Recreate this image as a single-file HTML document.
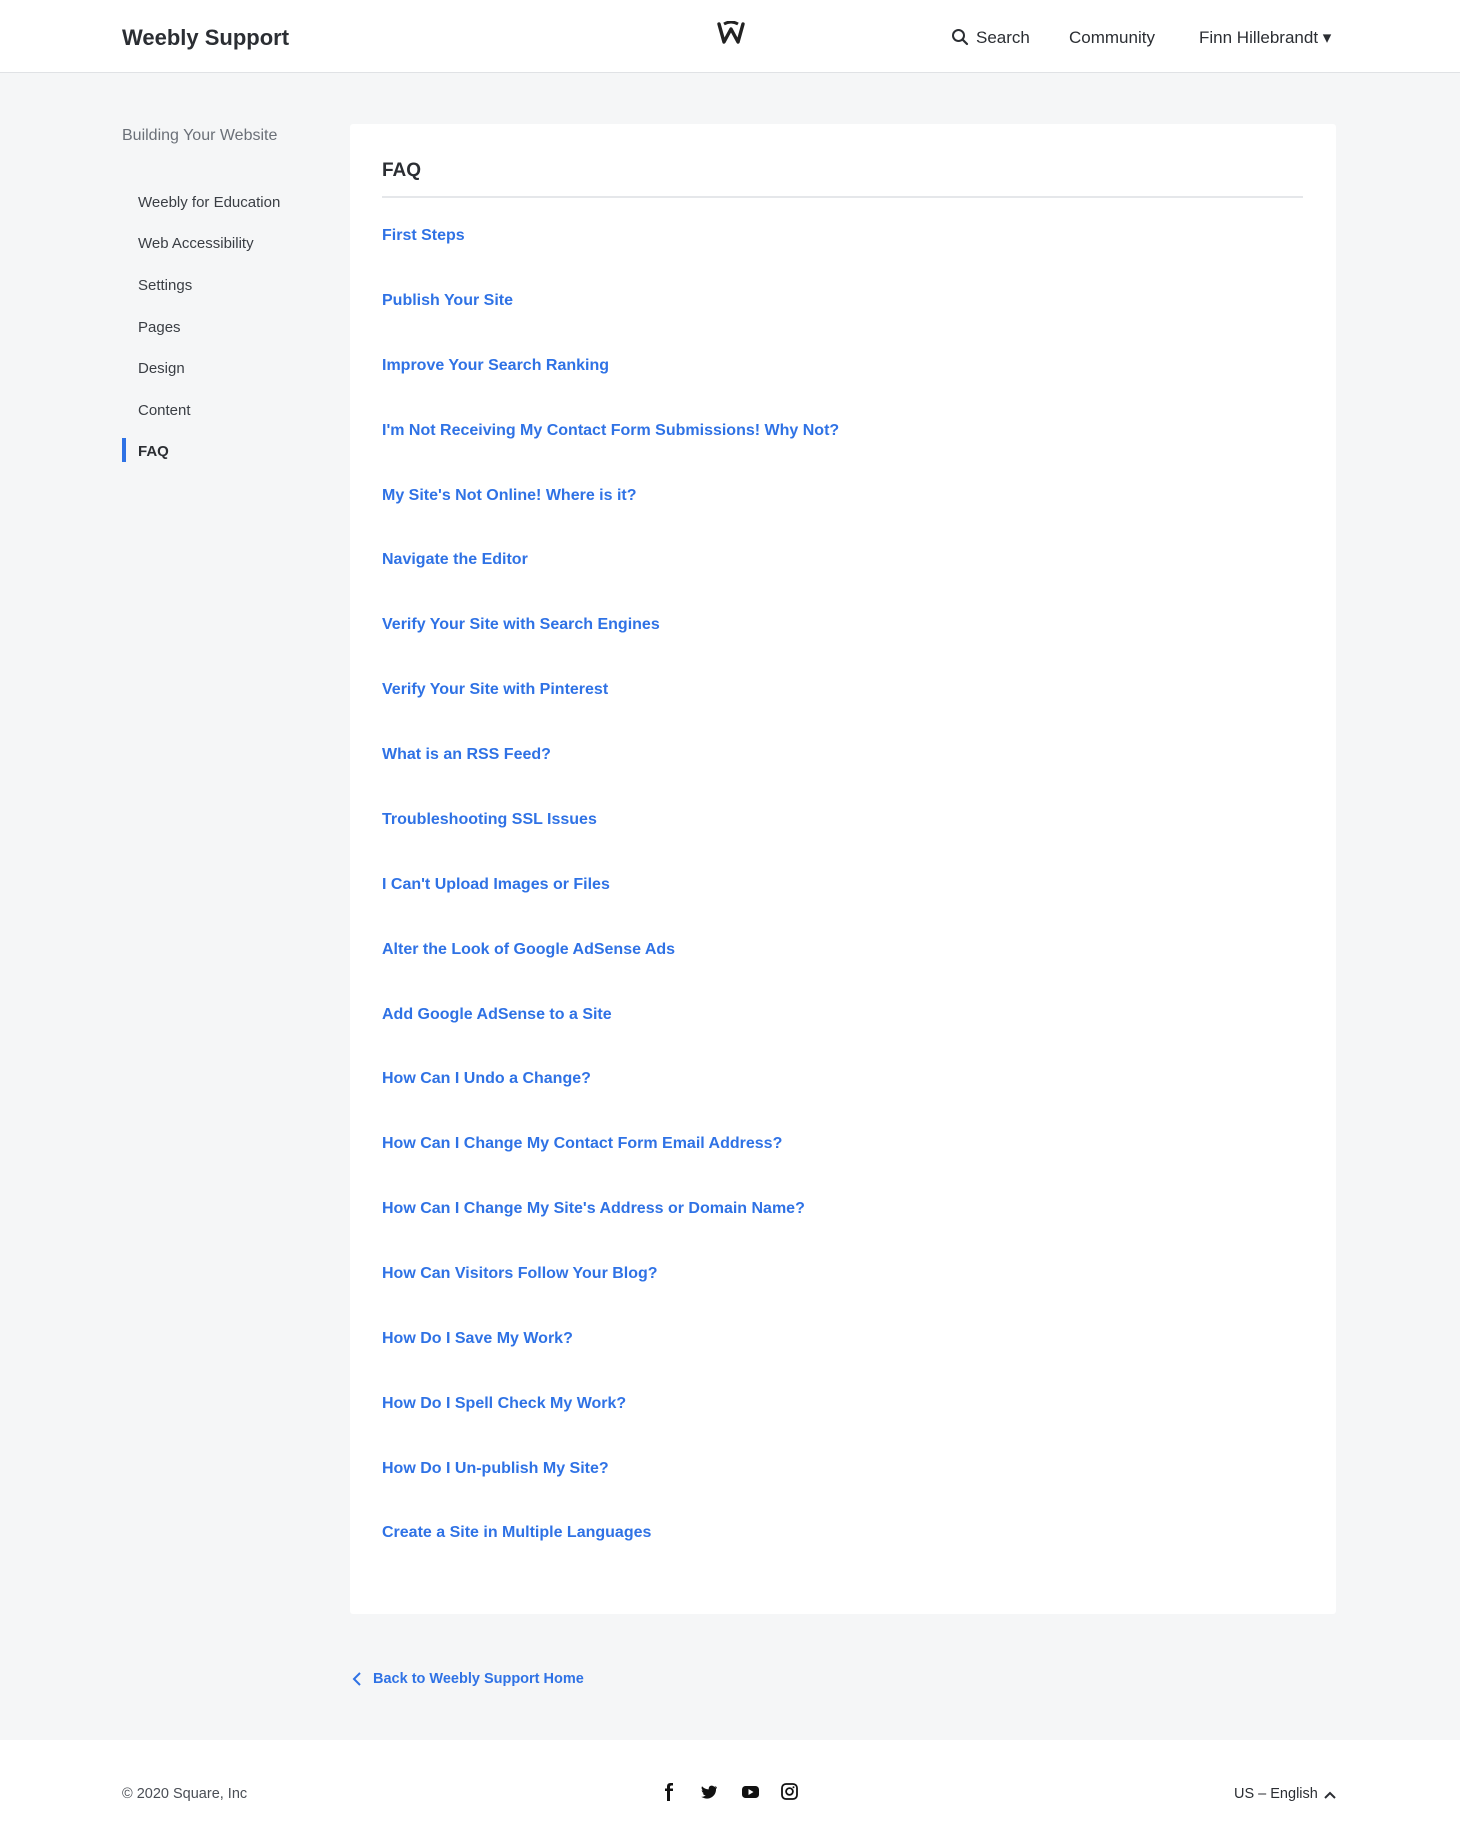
<!DOCTYPE html>
<html><head><meta charset="utf-8"><style>
*{margin:0;padding:0;box-sizing:border-box}
body{width:1460px;height:1845px;background:#f5f6f7;font-family:"Liberation Sans",sans-serif;position:relative;overflow:hidden;color:#2b2e33}
.hdr{position:absolute;left:0;top:0;width:1460px;height:73px;background:#fff;border-bottom:1px solid #e0e2e5}
.abs{position:absolute;white-space:nowrap}
.title{left:122px;top:25px;font-size:22px;font-weight:bold;color:#2b2e33}
.nav{top:28px;font-size:17px;color:#2b2e33}
.side{left:122px;top:127px;font-size:16px;color:#6b7078}
.si{left:138px;font-size:15px;color:#3a3e44}
.card{position:absolute;left:350px;top:124px;width:986px;height:1490px;background:#fff;border-radius:3px}
.faq{left:382px;top:160px;font-size:19px;font-weight:bold;color:#2b2e33}
.div{position:absolute;left:382px;top:196px;width:921px;height:2px;background:#e5e7ea}
.lk{left:382px;font-size:16px;font-weight:bold;color:#2f72e5}
.ftr{position:absolute;left:0;top:1740px;width:1460px;height:105px;background:#fff}
</style></head><body>
<div class="hdr"></div>
<div class="abs title">Weebly Support</div>
<svg class="abs" style="left:716px;top:21px" width="30" height="24" viewBox="0 0 30 24"><path d="M3 3 L8 21 L15 8 L22 21 L27 3" fill="none" stroke="#222" stroke-width="3.4" stroke-linejoin="round" stroke-linecap="round"/><path d="M8 3 Q15 -1 22 3" fill="none" stroke="#222" stroke-width="3"/></svg>
<svg class="abs" style="left:951px;top:28px" width="18" height="18" viewBox="0 0 18 18"><circle cx="7.5" cy="7.5" r="5.5" fill="none" stroke="#2b2e33" stroke-width="2"/><path d="M11.5 11.5 L16 16" stroke="#2b2e33" stroke-width="2.2" stroke-linecap="round"/></svg>
<div class="abs nav" style="left:976px">Search</div>
<div class="abs nav" style="left:1069px">Community</div>
<div class="abs nav" style="left:1199px">Finn Hillebrandt ▾</div>

<div class="abs side">Building Your Website</div>
<div class="abs si" style="top:194px">Weebly for Education</div>
<div class="abs si" style="top:235px">Web Accessibility</div>
<div class="abs si" style="top:277px">Settings</div>
<div class="abs si" style="top:319px">Pages</div>
<div class="abs si" style="top:360px">Design</div>
<div class="abs si" style="top:402px">Content</div>
<div class="abs" style="left:122px;top:438px;width:4px;height:24px;background:#2f72e5"></div>
<div class="abs si" style="top:443px;font-weight:bold;color:#2b2e33">FAQ</div>

<div class="card"></div>
<div class="abs faq">FAQ</div>
<div class="div"></div>
<div class="abs lk" style="top:227px">First Steps</div>
<div class="abs lk" style="top:292px">Publish Your Site</div>
<div class="abs lk" style="top:357px">Improve Your Search Ranking</div>
<div class="abs lk" style="top:422px">I'm Not Receiving My Contact Form Submissions! Why Not?</div>
<div class="abs lk" style="top:487px">My Site's Not Online! Where is it?</div>
<div class="abs lk" style="top:551px">Navigate the Editor</div>
<div class="abs lk" style="top:616px">Verify Your Site with Search Engines</div>
<div class="abs lk" style="top:681px">Verify Your Site with Pinterest</div>
<div class="abs lk" style="top:746px">What is an RSS Feed?</div>
<div class="abs lk" style="top:811px">Troubleshooting SSL Issues</div>
<div class="abs lk" style="top:876px">I Can't Upload Images or Files</div>
<div class="abs lk" style="top:941px">Alter the Look of Google AdSense Ads</div>
<div class="abs lk" style="top:1006px">Add Google AdSense to a Site</div>
<div class="abs lk" style="top:1070px">How Can I Undo a Change?</div>
<div class="abs lk" style="top:1135px">How Can I Change My Contact Form Email Address?</div>
<div class="abs lk" style="top:1200px">How Can I Change My Site's Address or Domain Name?</div>
<div class="abs lk" style="top:1265px">How Can Visitors Follow Your Blog?</div>
<div class="abs lk" style="top:1330px">How Do I Save My Work?</div>
<div class="abs lk" style="top:1395px">How Do I Spell Check My Work?</div>
<div class="abs lk" style="top:1460px">How Do I Un-publish My Site?</div>
<div class="abs lk" style="top:1524px">Create a Site in Multiple Languages</div>

<svg class="abs" style="left:352px;top:1671px" width="10" height="16" viewBox="0 0 10 16"><path d="M8 2 L2 8 L8 14" fill="none" stroke="#2f72e5" stroke-width="2"/></svg>
<div class="abs lk" style="left:373px;top:1671px;font-size:14.5px">Back to Weebly Support Home</div>

<div class="ftr"></div>
<div class="abs" style="left:122px;top:1786px;font-size:14.5px;color:#4a4e55">© 2020 Square, Inc</div>
<svg class="abs" style="left:660px;top:1782px" width="140" height="20" viewBox="0 0 140 20">
<path d="M10 19 V9 H13 V6.5 H10 V5 Q10 3.5 11.5 3.5 H13 V1 H10.5 Q7 1 7 4.5 V6.5 H5 V9 H7 V19Z" fill="#111"/>
<g transform="translate(16,0)"><path d="M41 5 Q40 5.5 39 5.7 Q40 5 40.5 4 Q39.5 4.6 38.3 4.8 Q37 3.5 35.3 3.6 Q32.5 4 32.7 7.4 Q28.5 7.2 26 4.3 Q24.8 6.8 27 8.5 Q26.3 8.5 25.7 8.1 Q25.8 10.5 28.1 11.2 Q27.4 11.4 26.7 11.2 Q27.5 13.3 29.8 13.4 Q27.6 15.1 25 14.8 Q33 19.2 38.2 13 Q40.2 10.3 40 7 Q41 6.2 41 5Z" fill="#111"/></g>
<rect x="82" y="4" width="17" height="12" rx="3.5" fill="#111"/><path d="M88.5 7 L93.5 10 L88.5 13Z" fill="#fff"/>
<rect x="122" y="2" width="15" height="15" rx="4" fill="none" stroke="#111" stroke-width="1.8"/><circle cx="129.5" cy="9.5" r="3.4" fill="none" stroke="#111" stroke-width="1.8"/><circle cx="133.5" cy="5.2" r="1" fill="#111"/>
</svg>
<div class="abs" style="left:1234px;top:1786px;font-size:14.5px;color:#2b2e33">US – English</div>
<svg class="abs" style="left:1323px;top:1789px" width="14" height="12" viewBox="0 0 14 12"><path d="M2 9 L7 4 L12 9" fill="none" stroke="#2b2e33" stroke-width="2"/></svg>
</body></html>
